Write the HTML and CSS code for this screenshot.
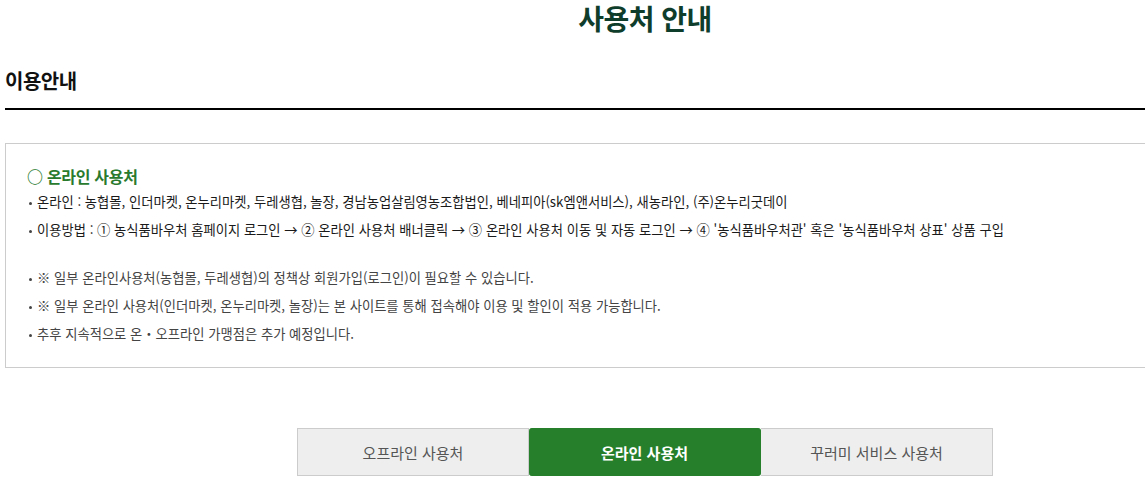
FILE: index.html
```html
<!DOCTYPE html>
<html lang="ko">
<head>
<meta charset="utf-8">
<title>사용처 안내</title>
<link rel="stylesheet" href="styles.css">
</head>
<body>
<div class="wrap">
  <h1 class="title">사용처 안내</h1>
  <h2 class="sub">이용안내</h2>
  <div class="info">
    <h3 class="info-head">○ 온라인 사용처</h3>
    <ul class="list">
      <li class="item">온라인 : 농협몰, 인더마켓, 온누리마켓, 두레생협, 놀장, 경남농업살림영농조합법인, 베네피아(sk엠앤서비스), 새농라인, (주)온누리굿데이</li>
      <li class="item">이용방법 : ① 농식품바우처 홈페이지 로그인 → ② 온라인 사용처 배너클릭 → ③ 온라인 사용처 이동 및 자동 로그인 → ④ '농식품바우처관' 혹은 '농식품바우처 상표' 상품 구입</li>
    </ul>
    <ul class="list notes">
      <li class="item">※ 일부 온라인사용처(농협몰, 두레생협)의 정책상 회원가입(로그인)이 필요할 수 있습니다.</li>
      <li class="item">※ 일부 온라인 사용처(인더마켓, 온누리마켓, 놀장)는 본 사이트를 통해 접속해야 이용 및 할인이 적용 가능합니다.</li>
      <li class="item">추후 지속적으로 온・오프라인 가맹점은 추가 예정입니다.</li>
    </ul>
  </div>
  <div class="tabs">
    <a class="tab">오프라인 사용처</a>
    <a class="tab active">온라인 사용처</a>
    <a class="tab">꾸러미 서비스 사용처</a>
  </div>
</div>
</body>
</html>
```
FILE: styles.css
```css
html, body {
  margin: 0;
  padding: 0;
  background: #fff;
  overflow: hidden;
}
body {
  font-family: "Noto Sans CJK KR", "Noto Sans", sans-serif;
  color: #222;
}
.wrap {
  width: 1280px;
  margin-left: 5px;
}
.title {
  margin: 0;
  text-align: center;
  font-size: 28px;
  line-height: 36px;
  font-weight: 700;
  color: #0f3d2c;
  letter-spacing: -0.5px;
}
.sub {
  margin: 30px 0 0;
  font-size: 20px;
  line-height: 30px;
  font-weight: 700;
  color: #111;
  padding-bottom: 12px;
  border-bottom: 2px solid #000;
  letter-spacing: -0.5px;
}
.info {
  margin-top: 33px;
  border: 1px solid #cccccc;
  padding: 20px 21px 19px;
}
.info-head {
  margin: 0;
  font-size: 16px;
  line-height: 24px;
  font-weight: 700;
  color: #2a7a2e;
  letter-spacing: -0.3px;
}
.list {
  list-style: none;
  margin: 0;
  padding: 0;
}
.item {
  position: relative;
  padding-left: 10px;
  font-size: 13.3px;
  line-height: 28px;
  color: #1a1a1a;
}
.item::before {
  content: "";
  position: absolute;
  left: 2px;
  top: 14px;
  width: 3px;
  height: 3px;
  border-radius: 50%;
  background: #444;
}
.notes {
  margin-top: 20px;
}
.notes .item {
  color: #444;
}
.tabs {
  display: flex;
  justify-content: center;
  margin-top: 60px;
}
.tab {
  width: 232px;
  height: 48px;
  display: flex;
  align-items: center;
  justify-content: center;
  background: #eeeeee;
  border: 1px solid #cccccc;
  font-size: 15px;
  color: #555;
  box-sizing: border-box;
}
.tab + .tab {
  border-left: none;
}
.tab.active {
  background: #267f2b;
  border-color: #267f2b;
  color: #fff;
  font-weight: 700;
  border-radius: 3px;
}
```
